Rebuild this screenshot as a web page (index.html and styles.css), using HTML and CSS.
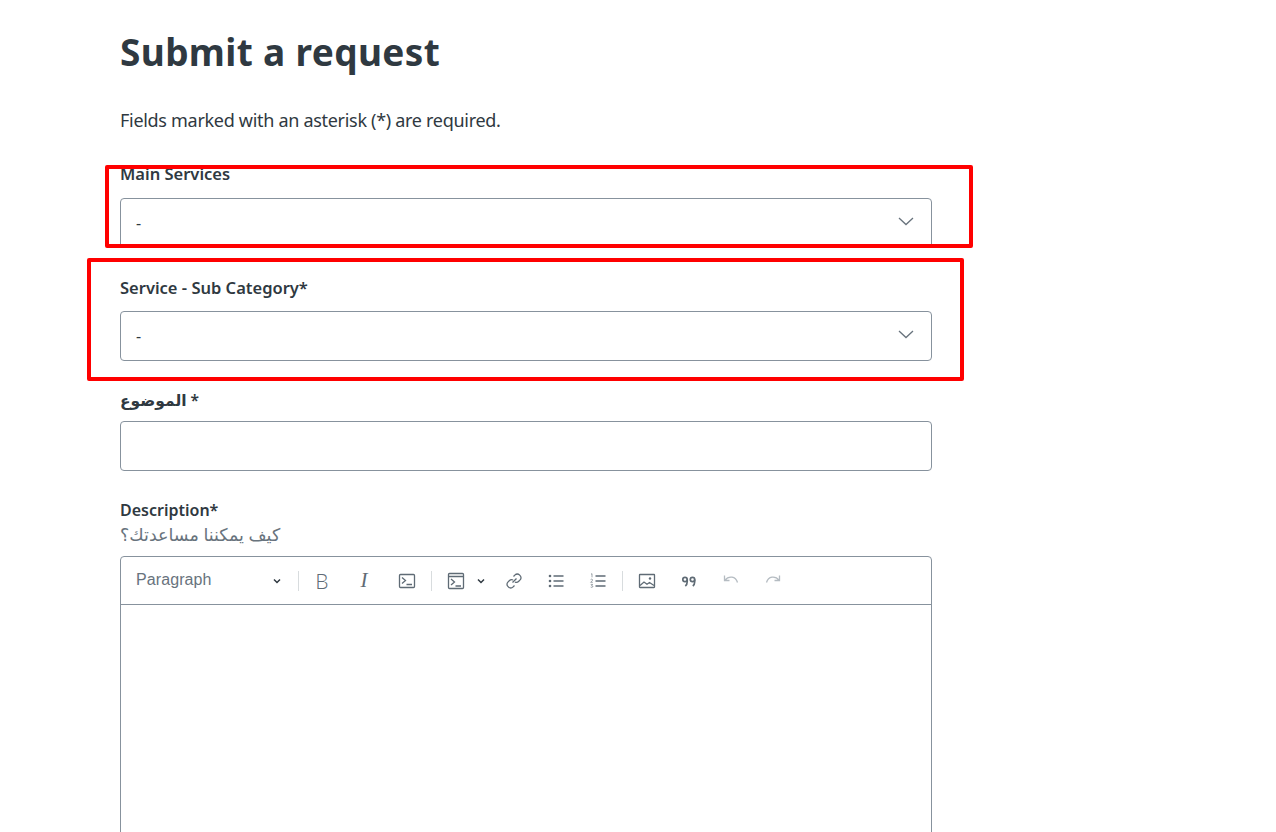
FILE: index.html
```html
<!DOCTYPE html>
<html lang="en">
<head>
    <meta charset="UTF-8">
    <meta name="viewport" content="width=device-width, initial-scale=1.0">
    <title>Submit a request</title>
    <link rel="stylesheet" href="styles.css">
</head>
<body>
    <main class="container">
        <h1 class="title">Submit a request</h1>
        <p class="intro">Fields marked with an asterisk (*) are required.</p>

        <div class="field field-main">
            <label class="label">Main Services</label>
            <div class="select">
                <span>-</span>
                <svg class="chevron" viewBox="0 0 16 9"><path d="M1 1l7 6.500L15 1"/></svg>
            </div>
        </div>

        <div class="field field-sub">
            <label class="label">Service - Sub Category*</label>
            <div class="select">
                <span>-</span>
                <svg class="chevron" viewBox="0 0 16 9"><path d="M1 1l7 6.500L15 1"/></svg>
            </div>
        </div>

        <div class="field field-subject">
            <label class="label" for="subject">الموضوع *</label>
            <input class="input" type="text" id="subject">
        </div>

        <div class="field field-description">
            <label class="label">Description*</label>
            <p class="hint">كيف يمكننا مساعدتك؟</p>
            <div class="editor">
                <div class="toolbar">
                    <div class="heading-dropdown">
                        <span>Paragraph</span>
                        <svg class="caret" viewBox="0 0 10 10"><path d="M2 3.500l3 3 3-3"/></svg>
                    </div>
                    <span class="separator"></span>
                    <button class="tool glyph-bold">B</button>
                    <button class="tool glyph-italic">I</button>
                    <button class="tool tool-code">
                        <svg viewBox="0 0 20 20"><rect x="2.500" y="3.500" width="15" height="13" rx="1"/><path d="M5 6.500l3.500 3-3.500 3M9.500 13.500h5.500"/></svg>
                    </button>
                    <span class="separator"></span>
                    <div class="split-tool">
                        <svg viewBox="0 0 20 20"><rect x="2.500" y="2.500" width="15" height="15" rx="1"/><path d="M2.500 5.500h15M5 8l3.500 3L5 14M9.500 15h5.500"/></svg>
                        <svg class="caret" viewBox="0 0 10 10"><path d="M2 3.500l3 3 3-3"/></svg>
                    </div>
                    <button class="tool">
                        <svg viewBox="0 0 20 20"><path d="M8.500 11.500l4-4M9.500 5.500l1.600-1.600a3 3 0 0 1 4.300 0l.7.7a3 3 0 0 1 0 4.300l-1.600 1.600a3 3 0 0 1-3.600.5M10.500 14.500l-1.600 1.600a3 3 0 0 1-4.300 0l-.7-.7a3 3 0 0 1 0-4.300l1.600-1.600a3 3 0 0 1 3.600-.5"/></svg>
                    </button>
                    <button class="tool">
                        <svg viewBox="0 0 20 20"><path d="M7.500 5h10M7.500 10h10M7.500 15h10"/><circle class="dot" cx="4" cy="5" r="1.300"/><circle class="dot" cx="4" cy="10" r="1.300"/><circle class="dot" cx="4" cy="15" r="1.300"/></svg>
                    </button>
                    <button class="tool">
                        <svg viewBox="0 0 20 20"><path d="M7.500 5h10M7.500 10h10M7.500 15h10"/><path class="thin" d="M3 3.200l1-.5v3.600M2.600 8.600c.6-.7 2-.5 2 .4 0 .8-1.300 1.400-2 2.300h2.200M2.700 13.400h1.900l-1 1.300c.8 0 1.200.3 1.200.9 0 .8-1.400 1-2.100.5"/></svg>
                    </button>
                    <span class="separator"></span>
                    <button class="tool tool-image">
                        <svg viewBox="0 0 20 20"><rect x="2.500" y="3.500" width="15" height="13" rx=".5"/><path d="M3 14.500l4-3.500 3 2.300 2.500-1.800 4.500 3"/><circle class="dot" cx="13" cy="7.500" r="1.200"/></svg>
                    </button>
                    <button class="tool tool-quote">
                        <svg viewBox="0 0 20 20"><circle cx="6" cy="8.500" r="2.200"/><circle cx="13.500" cy="8.500" r="2.200"/><path d="M8.200 8.500v2.200c0 2-.6 3.300-1.900 4.300M15.700 8.500v2.200c0 2-.6 3.300-1.900 4.300"/></svg>
                    </button>
                    <button class="tool disabled">
                        <svg viewBox="0 0 20 20"><path d="M3.500 4.500v5h5M3.800 9.300C6 6.600 8.300 5.800 11 6.200c2.700.4 4.600 2.300 5.500 5.300"/></svg>
                    </button>
                    <button class="tool disabled">
                        <svg viewBox="0 0 20 20"><path d="M16.500 4.500v5h-5M16.200 9.300C14 6.600 11.700 5.800 9 6.200c-2.700.4-4.600 2.300-5.500 5.300"/></svg>
                    </button>
                </div>
                <div class="editor-body"></div>
            </div>
        </div>

        <div class="highlight highlight-main"></div>
        <div class="highlight highlight-sub"></div>
    </main>
</body>
</html>
```

FILE: styles.css
```css
html, body {
    height: 832px;
    overflow: hidden;
}
body {
    font-family: "Noto Sans", "DejaVu Sans", sans-serif;
    background-color: #ffffff;
    color: #2f3941;
    margin: 0;
    padding: 0;
}
.container {
    position: relative;
    width: 812px;
    height: 832px;
    margin-left: 120px;
    padding-top: 29px;
    box-sizing: border-box;
}
.title {
    font-size: 37px;
    line-height: 46px;
    font-weight: 700;
    letter-spacing: .35px;
    margin: 0;
}
.intro {
    font-size: 18px;
    line-height: 25px;
    letter-spacing: -.3px;
    margin: 33px 0 29px;
}
.field {
    margin-bottom: 27px;
}
.field-main {
    margin-bottom: 28px;
}
.label {
    display: block;
    font-size: 16.500px;
    font-weight: 600;
    line-height: 24px;
    margin-bottom: 11px;
}
.field-main .label {
    margin-bottom: 12px;
}
.field-subject .label {
    font-size: 15.500px;
    margin-bottom: 9px;
}
.field-description .label {
    font-size: 16px;
    margin-bottom: 0;
}
.hint {
    font-size: 17.500px;
    line-height: 24px;
    color: #68737d;
    margin: 0 0 10px;
}
.select {
    display: flex;
    align-items: center;
    justify-content: space-between;
    box-sizing: border-box;
    height: 50px;
    padding: 0 17px 0 15px;
    border: 1px solid #87929d;
    border-radius: 4px;
    font-size: 16px;
}
.chevron {
    width: 16px;
    height: 9px;
    margin-bottom: 3px;
}
.chevron path {
    fill: none;
    stroke: #68737d;
    stroke-width: 1.300;
}
.input {
    display: block;
    box-sizing: border-box;
    width: 100%;
    height: 50px;
    border: 1px solid #87929d;
    border-radius: 4px;
    padding: 0 16px;
}
.editor {
    border: 1px solid #87929d;
    border-radius: 4px 4px 0 0;
    height: 420px;
}
.toolbar {
    display: flex;
    align-items: center;
    height: 47px;
    border-bottom: 1px solid #87929d;
}
.heading-dropdown {
    display: flex;
    align-items: center;
    justify-content: space-between;
    box-sizing: border-box;
    width: 174px;
    height: 100%;
    padding: 0 13px 0 15px;
    font-family: "Liberation Sans", Arial, sans-serif;
    font-size: 16px;
    letter-spacing: .1px;
    color: #68737d;
}
.heading-dropdown span {
    margin-bottom: 2px;
}
.caret {
    width: 10px;
    height: 10px;
}
.caret path {
    fill: none;
    stroke: #2f3941;
    stroke-width: 1.500;
}
.separator {
    width: 1px;
    height: 20px;
    background: #d8dcde;
    margin: 0 2px 0 3px;
}
.tool {
    display: flex;
    align-items: center;
    justify-content: center;
    width: 42px;
    height: 40px;
    padding: 0;
    background: none;
    border: none;
    color: #5f6b75;
}
.tool-code,
.tool-image {
    margin-left: 1px;
}
.tool svg,
.split-tool svg:first-child {
    width: 20px;
    height: 20px;
}
.tool svg *,
.split-tool svg:first-child * {
    fill: none;
    stroke: #5f6b75;
    stroke-width: 1.300;
}
.tool svg .dot {
    fill: #5f6b75;
    stroke: none;
}
.tool svg .thin {
    stroke-width: .6;
}
.tool-quote svg * {
    stroke-width: 1.700;
}
.tool.disabled svg * {
    stroke: #b5bcc2;
}
.glyph-bold {
    font-family: "Lato", "Liberation Sans", sans-serif;
    font-size: 21px;
    font-weight: 300;
}
.glyph-italic {
    font-family: "Liberation Serif", "Times New Roman", serif;
    font-size: 21px;
    font-style: italic;
}
.split-tool {
    display: flex;
    align-items: center;
    gap: 10px;
    box-sizing: border-box;
    width: 59px;
    padding-left: 12px;
}
.highlight {
    position: absolute;
    box-sizing: border-box;
    border: 4px solid #ff0000;
    border-radius: 2px;
    pointer-events: none;
}
.highlight-main {
    left: -15px;
    top: 165px;
    width: 868px;
    height: 83px;
}
.highlight-sub {
    left: -33px;
    top: 258px;
    width: 877px;
    height: 123px;
}
```
